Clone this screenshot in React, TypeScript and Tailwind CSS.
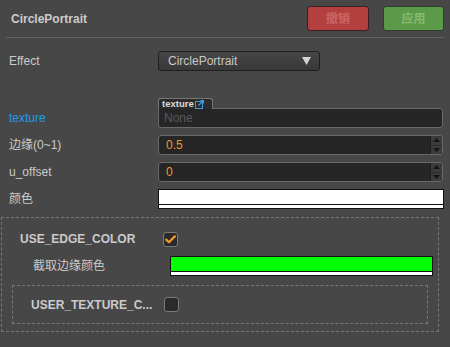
import React from "react";

const font = { fontFamily: '"Liberation Sans", Arial, "Noto Sans CJK SC", sans-serif' };

function Spinner() {
  return (
    <div className="flex h-full w-[12px] flex-col border-l border-[#1e1e1e] bg-[#3c3c3c]">
      <div className="flex flex-1 items-center justify-center border-b border-[#2a2a2a]">
        <svg width="7" height="4" viewBox="0 0 7 4">
          <path d="M0 4 L3.5 0 L7 4 Z" fill="#151515" />
        </svg>
      </div>
      <div className="flex flex-1 items-center justify-center">
        <svg width="7" height="4" viewBox="0 0 7 4">
          <path d="M0 0 L7 0 L3.5 4 Z" fill="#151515" />
        </svg>
      </div>
    </div>
  );
}

function NumberInput({ value }: { value: string }) {
  return (
    <div className="flex h-[20px] w-[285px] items-stretch overflow-hidden rounded-[3px] border border-[#6a6a6a] bg-[#262626]">
      <div className="flex flex-1 items-center pl-[7px] text-[12px] text-[#f0962d]">{value}</div>
      <Spinner />
    </div>
  );
}

function Swatch({ color, width }: { color: string; width: string }) {
  return (
    <div className={`flex h-[20px] flex-col border border-[#111] ${width}`}>
      <div className="h-[14px]" style={{ background: color }} />
      <div className="flex-1 border-t border-[#111] bg-white" />
    </div>
  );
}

function CheckBox({ checked }: { checked?: boolean }) {
  return (
    <div className="flex h-[15px] w-[15px] items-center justify-center rounded-[3px] border border-[#7a7a7a] bg-[#2a2a2a]">
      {checked && (
        <svg width="11" height="9" viewBox="0 0 11 9">
          <path d="M1.2 4.6 L4 7.2 L9.8 1.4" stroke="#f39a2c" strokeWidth="2.2" fill="none" strokeLinecap="round" strokeLinejoin="round" />
        </svg>
      )}
    </div>
  );
}

function Row({ label, children, className = "", labelClass = "text-[#cbcbcb]" }: { label: string; children: React.ReactNode; className?: string; labelClass?: string }) {
  return (
    <div className={`flex items-end pl-[9px] ${className}`}>
      <div className={`flex h-[20px] w-[149px] items-center text-[12px] ${labelClass}`}>{label}</div>
      {children}
    </div>
  );
}

export default function App() {
  return (
    <div className="h-[347px] w-[450px] overflow-hidden bg-[#474747]" style={font}>
      <div className="flex h-[37px] items-center pl-[11px] pr-[6px]">
        <span className="text-[12px] font-bold text-[#cccccc]">CirclePortrait</span>
        <div className="ml-auto flex gap-[14px]">
          <button className="h-[25px] w-[62px] rounded-[3px] border border-[#3a2020] bg-[#b3403f] text-[12px] font-bold text-[#cc6565]">撤销</button>
          <button className="h-[25px] w-[61px] rounded-[3px] border border-[#2e3e28] bg-[#5a9a48] text-[12px] font-bold text-[#86b873]">应用</button>
        </div>
      </div>
      <div className="mx-[6px] h-px bg-[#626262]" />

      <Row label="Effect" className="mt-[13px]">
        <div className="flex h-[20px] w-[162px] items-center rounded-[3px] border border-[#1f1f1f] bg-gradient-to-b from-[#454545] to-[#393939] pl-[9px] pr-[8px] text-[12px] text-[#c8c8c8]">
          <span>CirclePortrait</span>
          <svg className="ml-auto" width="9" height="8" viewBox="0 0 9 8">
            <path d="M0 0 H9 L4.5 8 Z" fill="#d4d4d4" />
          </svg>
        </div>
      </Row>

      <Row label="texture" className="mt-[27px]" labelClass="text-[#1d9cf0]">
        <div className="flex w-[285px] flex-col">
          <div className="relative z-10 -mb-px flex h-[11px] w-[55px] items-center gap-[1px] rounded-t-[3px] border-x border-t border-[#777] bg-[#2b2b2b] pl-[3px] text-[9.5px] font-bold leading-none text-[#dddddd]">
            <span>texture</span>
            <svg width="9" height="9" viewBox="0 0 9 9">
              <rect x="0.5" y="1.5" width="7" height="7" fill="none" stroke="#3d9be0" strokeWidth="1" />
              <path d="M3.5 5.5 L8.5 0.5 M5.5 0.5 H8.5 V3.5" stroke="#3d9be0" strokeWidth="1.2" fill="none" />
            </svg>
          </div>
          <div className="flex h-[20px] items-center rounded-[3px] rounded-tl-none border border-[#6a6a6a] bg-[#262626] pl-[5px] text-[12px] text-[#595959]">None</div>
        </div>
      </Row>

      <Row label="边缘(0~1)" className="mt-[7px]">
        <NumberInput value="0.5" />
      </Row>
      <Row label="u_offset" className="mt-[7px]">
        <NumberInput value="0" />
      </Row>
      <Row label="颜色" className="mt-[7px]">
        <Swatch color="#ffffff" width="w-[286px]" />
      </Row>

      <div className="ml-[1px] mt-[8px] h-[115px] w-[438px] border border-dashed border-[#777]">
        <div className="mt-[12px] flex items-center pl-[18px]">
          <div className="w-[143px] text-[12px] font-bold text-[#cbcbcb]">USE_EDGE_COLOR</div>
          <CheckBox checked />
        </div>
        <div className="mt-[8px] flex items-center pl-[31px]">
          <div className="w-[137px] text-[12px] text-[#cbcbcb]">截取边缘颜色</div>
          <Swatch color="#00ff00" width="w-[263px]" />
        </div>
        <div className="ml-[10px] mt-[9px] flex h-[39px] w-[416px] items-center border border-dashed border-[#777] pl-[18px]">
          <div className="w-[133px] text-[12px] font-bold text-[#cbcbcb]">USER_TEXTURE_C...</div>
          <CheckBox />
        </div>
      </div>
    </div>
  );
}
